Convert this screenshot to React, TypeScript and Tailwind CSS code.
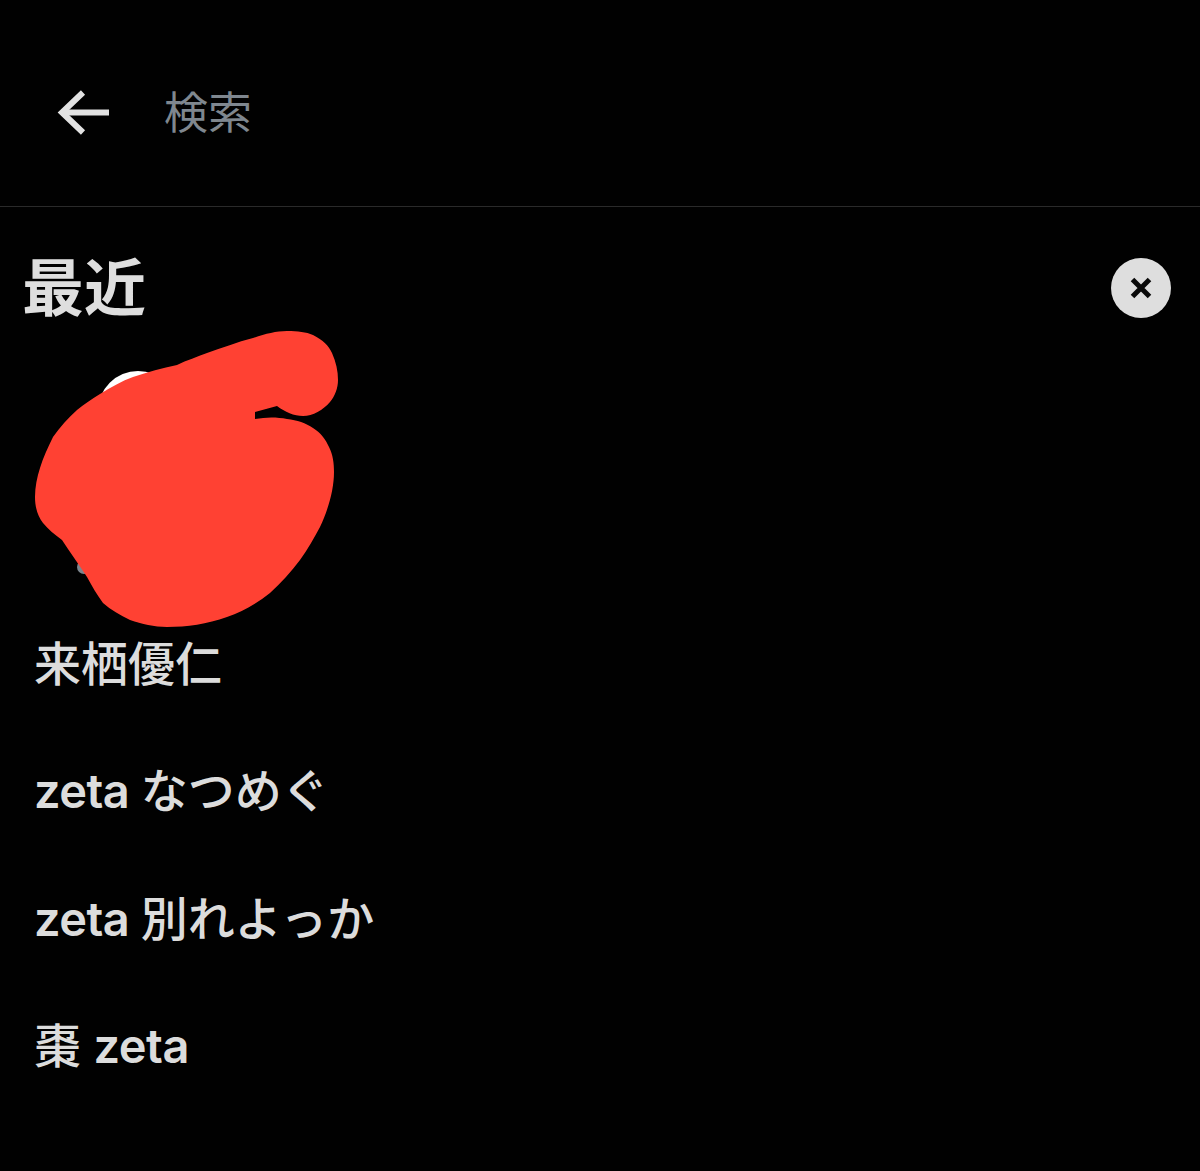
// each search is split so the latin part can be heavier than the kana
const recent = [
  [{ text: "来栖優仁", latin: false }],
  [{ text: "zeta ", latin: true }, { text: "なつめぐ", latin: false }],
  [{ text: "zeta ", latin: true }, { text: "別れよっか", latin: false }],
  [{ text: "棗 ", latin: false }, { text: "zeta", latin: true }],
];

// hand-drawn red blot over the avatars, in page coordinates
const blot =
  "M177 365 C187 360 197 357 207 353 C222 348 237 342 253 338 C265 334 276 331 287 331 C298 331 306 332 313 335 C323 340 329 346 332 353 C336 362 338 371 338 380 C338 388 335 396 330 402 C323 410 313 416 303 416 C294 416 285 412 277 406 L255 412 L255 419 C266 417 277 417 287 419 C297 420 306 423 313 428 C321 433 326 440 329 447 C333 455 334 463 334 472 C334 490 328 510 320 527 C314 538 308 549 300 560 C291 572 281 583 270 593 C256 604 242 612 227 617 C207 624 187 627 167 627 C154 627 142 624 130 620 C120 615 111 610 103 603 C97 595 92 586 87 577 C79 565 70 552 62 540 C55 535 48 529 43 523 C37 515 35 506 35 497 C35 487 37 477 40 468 C43 458 48 447 53 437 C60 427 68 418 77 410 C84 404 92 399 100 394 C111 387 122 381 133 377 C148 372 162 368 177 365 Z";

function BackArrow() {
  return (
    <svg width="54" height="46" viewBox="0 0 54 46" fill="none" stroke="#e2e2e2" strokeWidth="6">
      <path d="M52 22.5H6" />
      <path d="M26 2.5L5 22.5L26 42.5" />
    </svg>
  );
}

export default function App() {
  return (
    <div
      className="relative h-[1171px] w-[1200px] overflow-hidden bg-[#010101] text-[#dcdcdc]"
      style={{ fontFamily: '"Inter", "Noto Sans CJK JP", sans-serif' }}
    >
      {/* Search bar */}
      <div className="flex h-[207px] items-center border-b border-[#2a2a2a] pt-[19px] pl-[57px]">
        <BackArrow />
        <span className="ml-[53px] text-[44px] leading-none text-[#7f878f]">検索</span>
      </div>

      {/* Recent header */}
      <div className="flex items-start justify-between pl-[22px] pr-[29px] pt-[50px]">
        <h1 className="text-[62px] font-semibold leading-[64px] text-[#dedede]">最近</h1>
        <button className="mt-[1px] flex h-[60px] w-[60px] items-center justify-center rounded-full bg-[#dedede]">
          <svg width="22" height="22" viewBox="0 0 22 22" stroke="#0a0a0a" strokeWidth="5">
            <path d="M2.5 2.5L19.5 19.5M19.5 2.5L2.5 19.5" />
          </svg>
        </button>
      </div>

      {/* Avatars row, mostly hidden by the blot */}
      <div className="flex h-[279px] flex-col items-start pl-[98px] pt-[50px]">
        <div className="h-[80px] w-[80px] rounded-full bg-white" />
        <div className="-ml-[21px] mt-[109px] h-[14px] w-[14px] rounded-full bg-[#7d858d]" />
      </div>

      {/* Recent searches */}
      <ul className="pl-[34px]">
        {recent.map((parts) => (
          <li
            key={parts.map((p) => p.text).join("")}
            className="flex h-[127.3px] items-center whitespace-pre text-[47px] font-medium leading-none"
          >
            {parts.map((p) => (
              <span key={p.text} className={p.latin ? "font-semibold tracking-[-0.5px]" : ""}>
                {p.text}
              </span>
            ))}
          </li>
        ))}
      </ul>

      <svg className="absolute left-0 top-0" width="1200" height="1171" viewBox="0 0 1200 1171">
        <path d={blot} fill="#ff4133" />
      </svg>
    </div>
  );
}
